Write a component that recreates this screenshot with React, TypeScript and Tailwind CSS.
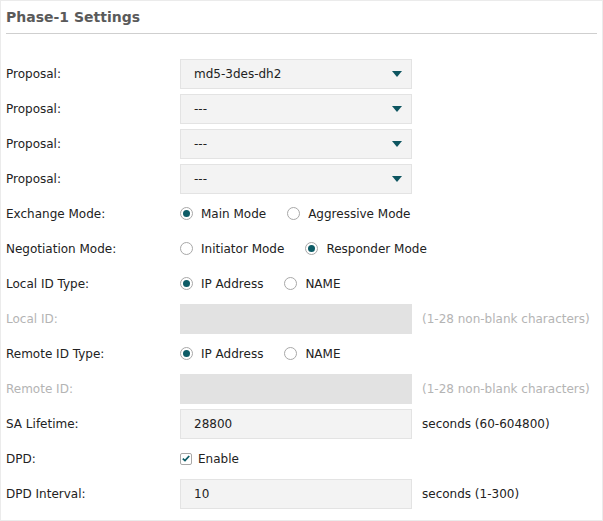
import React from "react";

const font = { fontFamily: '"DejaVu Sans", Verdana, sans-serif' };

function Label({ children, disabled }: { children: React.ReactNode; disabled?: boolean }) {
  return (
    <div className={`w-[174px] shrink-0 ${disabled ? "text-[#b4b4b4]" : "text-[#222]"}`}>{children}</div>
  );
}

function Select({ value }: { value: string }) {
  return (
    <div className="w-[232px] h-[30px] bg-[#f3f3f3] border border-[#e3e3e3] flex items-center justify-between pl-[13px] pr-[9px] text-[#222]">
      <span>{value}</span>
      <svg width="10" height="6" viewBox="0 0 10 6">
        <path d="M0 0 H10 L5 6 Z" fill="#0d5560" />
      </svg>
    </div>
  );
}

function Radio({ checked, label }: { checked?: boolean; label: string }) {
  return (
    <div className="flex items-center gap-[8px]">
      <span className="w-[13px] h-[13px] rounded-full border border-[#a8a8a8] bg-white flex items-center justify-center">
        {checked && <span className="w-[7px] h-[7px] rounded-full bg-[#0d5c66]" />}
      </span>
      <span className="text-[#222]">{label}</span>
    </div>
  );
}

function Input({ value, disabled }: { value?: string; disabled?: boolean }) {
  return (
    <div
      className={`w-[232px] h-[30px] border flex items-center pl-[13px] text-[#222] ${
        disabled ? "bg-[#e2e2e2] border-[#e2e2e2]" : "bg-[#f3f3f3] border-[#e3e3e3]"
      }`}
    >
      {value}
    </div>
  );
}

function Row({ children }: { children: React.ReactNode }) {
  return <div className="h-[35px] flex items-center">{children}</div>;
}

export default function App() {
  return (
    <div className="w-[603px] h-[521px] bg-white border border-[#ebebeb] text-[12px]" style={font}>
      <div className="mx-[5px] h-[33px] border-b border-[#cfcfcf] flex items-center">
        <span className="text-[14px] font-bold text-[#5a5a5a]">Phase-1 Settings</span>
      </div>
      <div className="pl-[5px] pt-[22px]">
        <Row>
          <Label>Proposal:</Label>
          <Select value="md5-3des-dh2" />
        </Row>
        <Row>
          <Label>Proposal:</Label>
          <Select value="---" />
        </Row>
        <Row>
          <Label>Proposal:</Label>
          <Select value="---" />
        </Row>
        <Row>
          <Label>Proposal:</Label>
          <Select value="---" />
        </Row>
        <Row>
          <Label>Exchange Mode:</Label>
          <div className="flex items-center gap-[21px]">
            <Radio checked label="Main Mode" />
            <Radio label="Aggressive Mode" />
          </div>
        </Row>
        <Row>
          <Label>Negotiation Mode:</Label>
          <div className="flex items-center gap-[21px]">
            <Radio label="Initiator Mode" />
            <Radio checked label="Responder Mode" />
          </div>
        </Row>
        <Row>
          <Label>Local ID Type:</Label>
          <div className="flex items-center gap-[21px]">
            <Radio checked label="IP Address" />
            <Radio label="NAME" />
          </div>
        </Row>
        <Row>
          <Label disabled>Local ID:</Label>
          <Input disabled />
          <span className="ml-[10px] text-[#b4b4b4]">(1-28 non-blank characters)</span>
        </Row>
        <Row>
          <Label>Remote ID Type:</Label>
          <div className="flex items-center gap-[21px]">
            <Radio checked label="IP Address" />
            <Radio label="NAME" />
          </div>
        </Row>
        <Row>
          <Label disabled>Remote ID:</Label>
          <Input disabled />
          <span className="ml-[10px] text-[#b4b4b4]">(1-28 non-blank characters)</span>
        </Row>
        <Row>
          <Label>SA Lifetime:</Label>
          <Input value="28800" />
          <span className="ml-[10px] text-[#222]">seconds (60-604800)</span>
        </Row>
        <Row>
          <Label>DPD:</Label>
          <div className="flex items-center gap-[6px]">
            <span className="w-[12px] h-[12px] border border-[#a8a8a8] rounded-[2px] bg-white flex items-center justify-center">
              <svg width="8" height="7" viewBox="0 0 8 7">
                <path d="M0.8 3.6 L3 5.6 L7.2 1" stroke="#0d5c66" strokeWidth="1.8" fill="none" />
              </svg>
            </span>
            <span className="text-[#222]">Enable</span>
          </div>
        </Row>
        <Row>
          <Label>DPD Interval:</Label>
          <Input value="10" />
          <span className="ml-[10px] text-[#222]">seconds (1-300)</span>
        </Row>
      </div>
    </div>
  );
}
